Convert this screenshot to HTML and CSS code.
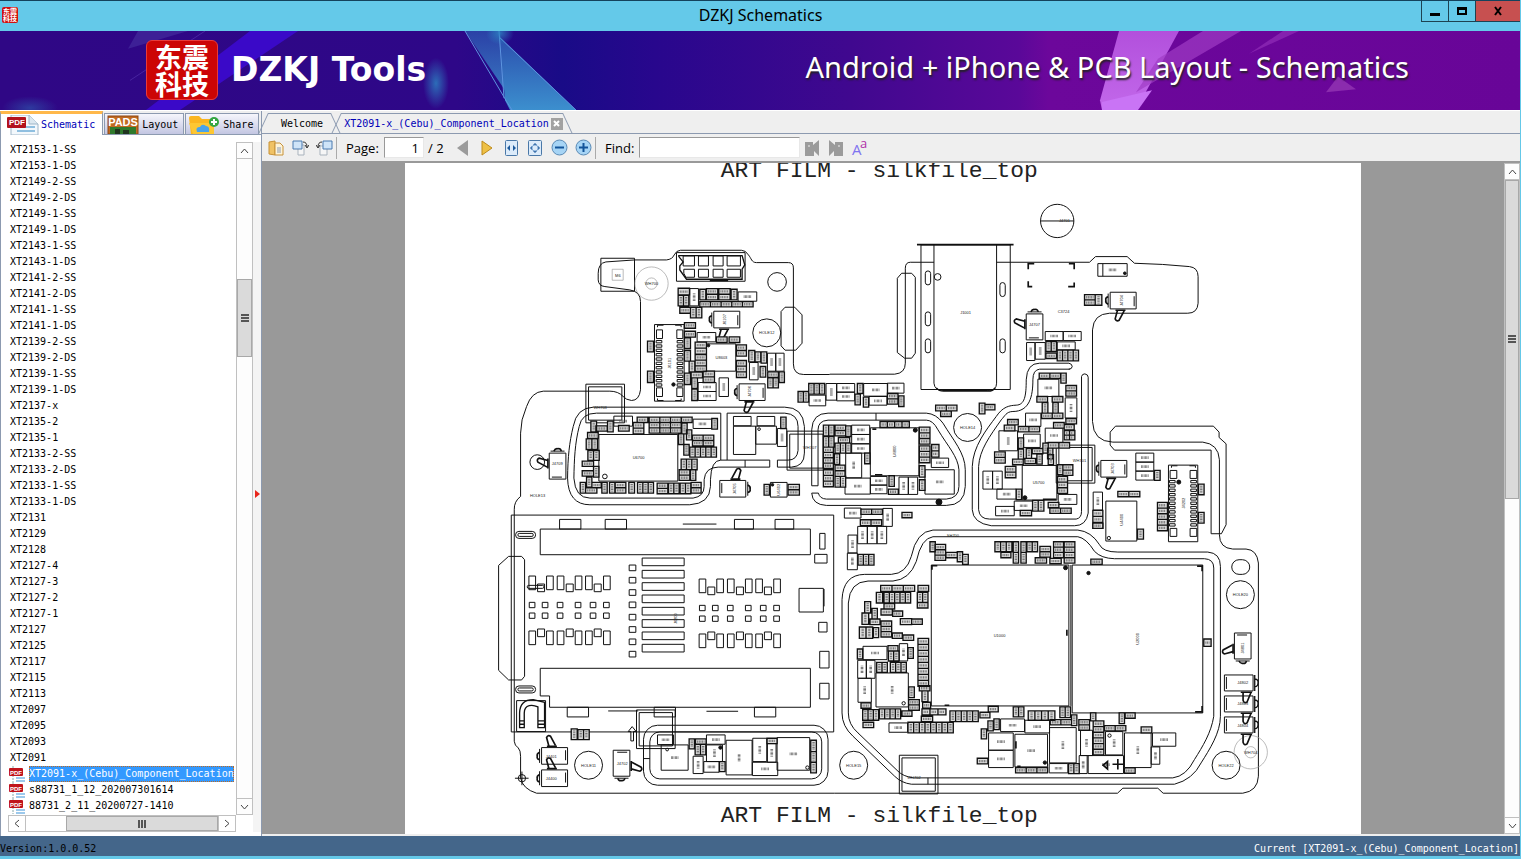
FILE: index.html
```html
<!DOCTYPE html>
<html lang="en">

<head>
    <meta charset="UTF-8">
    <meta name="viewport" content="width=device-width, initial-scale=1.0">
    <title>DZKJ Schematics</title>
    <link rel="stylesheet" href="styles.css">
</head>

<body>
    <header class="titlebar">
        <div class="app-icon"><span>东震</span><span>科技</span></div>
        <h1>DZKJ Schematics</h1>
        <div class="window-buttons">
            <button type="button" aria-label="Minimize"><svg width="12" height="12"><path d="M1 8h10v3H1z"/></svg></button>
            <button type="button" aria-label="Maximize"><svg width="12" height="12"><path d="M1 2h10v8H1zM3 5v3h6V5z" fill-rule="evenodd"/></svg></button>
            <button type="button" class="close" aria-label="Close"><svg width="12" height="12"><path d="M3 2l6 8M9 2l-6 8" stroke="#000" stroke-width="2"/></svg></button>
        </div>
    </header>

    <div class="banner">
        <svg class="banner-art" viewBox="0 0 1520 80" preserveAspectRatio="none" aria-hidden="true">
            <defs>
                <linearGradient id="base">
                    <stop offset="0" stop-color="#2f0785"/>
                    <stop offset="0.300" stop-color="#2e0788"/>
                    <stop offset="0.370" stop-color="#190b87"/>
                    <stop offset="0.430" stop-color="#28078d"/>
                    <stop offset="0.560" stop-color="#40088f"/>
                    <stop offset="0.670" stop-color="#5a0899"/>
                    <stop offset="0.690" stop-color="#6c079b"/>
                    <stop offset="1" stop-color="#680598"/>
                </linearGradient>
                <linearGradient id="shard" x2="0" y2="1">
                    <stop offset="0" stop-color="#2b4fae"/>
                    <stop offset="1" stop-color="#3c8fce"/>
                </linearGradient>
                <linearGradient id="beam" x2="0" y2="1">
                    <stop offset="0" stop-color="#b250dc"/>
                    <stop offset="1" stop-color="#c268ea"/>
                </linearGradient>
                <radialGradient id="glow">
                    <stop offset="0" stop-color="#2c86c4" stop-opacity="0.800"/>
                    <stop offset="1" stop-color="#2c86c4" stop-opacity="0"/>
                </radialGradient>
            </defs>
            <path d="M0 0h1520v80H0z" fill="url(#base)"/>
            <path d="M250 0h48L180 80h-34z" fill="#3d0ad8" opacity="0.800"/>
            <path d="M138 0h50l-60 18z" fill="#4b3aa5" opacity="0.500"/>
            <path d="M205 0l-75 50" stroke="#6240bb" opacity="0.500"/>
            <ellipse cx="436" cy="53" rx="13" ry="26" fill="url(#glow)"/>
            <ellipse cx="30" cy="78" rx="28" ry="12" fill="url(#glow)" opacity="0.500"/>
            <path d="M465 0h35l5 60z" fill="url(#shard)" opacity="0.800"/>
            <path d="M500 6l76 74h-66l-5-10z" fill="url(#shard)"/>
            <path d="M465 0l42 72 5 8M499 0l5 68M499 6l77 74" fill="none" stroke="#5e95e0"/>
            <ellipse cx="500" cy="2" rx="14" ry="12" fill="url(#glow)"/>
            <path d="M1119 0h60l-43 80h-34l-2-10z" fill="url(#beam)"/>
            <path d="M1102 72l50-12-14 20h-36z" fill="#c974f5"/>
            <path d="M1203 0h38l-105 62 22-34z" fill="#a03cc4" opacity="0.700"/>
            <path d="M1283 0h16l-50 23z" fill="#a03cc4" opacity="0.500"/>
            <path d="M1338 46l18 13-30 3z" fill="#8b2cae"/>
        </svg>
        <div class="brand">
            <div class="logo">东震科技</div>
            <strong>DZKJ Tools</strong>
        </div>
        <p class="slogan">Android + iPhone &amp; PCB Layout - Schematics</p>
    </div>

    <div class="workspace">
        <aside class="sidebar">
            <nav class="side-tabs">
                <button type="button" class="side-tab active">
                    <svg width="32" height="20" viewBox="0 0 32 20" aria-hidden="true">
                        <path d="M4 0h18l9 9v11H4z" fill="#f3f8fc" stroke="#9fb6c8"/>
                        <path d="M22 0v9h9" fill="#dce8f0" stroke="#9fb6c8"/>
                        <path d="M14 12h14M10 16h18" stroke="#8fbfe0" stroke-width="2"/>
                        <rect y="2" width="19" height="11" rx="1" fill="#b3121d"/>
                        <text x="10" y="10" class="icon-text" text-anchor="middle">PDF</text>
                    </svg>
                    Schematic
                </button>
                <button type="button" class="side-tab">
                    <svg width="32" height="19" viewBox="0 0 32 19" aria-hidden="true">
                        <rect x="1" y="1" width="30" height="18" fill="#c06a22" stroke="#8c4713"/>
                        <path d="M3 12h26v7H3z" fill="#2f7a2c"/>
                        <path d="M8 14h5v5H8zM16 15h6v4h-6z" fill="#20351f"/>
                        <text x="16" y="11" class="icon-text pads" text-anchor="middle">PADS</text>
                    </svg>
                    Layout
                </button>
                <button type="button" class="side-tab">
                    <svg width="32" height="19" viewBox="0 0 32 19" aria-hidden="true">
                        <path d="M1 3q0-2 2-2h8l3 3h11v15H3z" fill="#fbb621"/>
                        <path d="M1 8h25v11H5z" fill="#fdc733"/>
                        <path d="M9 17q-2-5 3-5 2-4 6-1 4 0 3 6z" fill="#4aa3ea"/>
                        <circle cx="26" cy="7" r="5" fill="#35a643"/>
                        <path d="M26 4v6M23 7h6" stroke="#fff" stroke-width="2"/>
                    </svg>
                    Share
                </button>
            </nav>
            <div class="side-body">
                <div class="tree-area">
                    <div class="tree-row">
                        <ul class="tree">
                            <li><a href="#">XT2153-1-SS</a></li>
                            <li><a href="#">XT2153-1-DS</a></li>
                            <li><a href="#">XT2149-2-SS</a></li>
                            <li><a href="#">XT2149-2-DS</a></li>
                            <li><a href="#">XT2149-1-SS</a></li>
                            <li><a href="#">XT2149-1-DS</a></li>
                            <li><a href="#">XT2143-1-SS</a></li>
                            <li><a href="#">XT2143-1-DS</a></li>
                            <li><a href="#">XT2141-2-SS</a></li>
                            <li><a href="#">XT2141-2-DS</a></li>
                            <li><a href="#">XT2141-1-SS</a></li>
                            <li><a href="#">XT2141-1-DS</a></li>
                            <li><a href="#">XT2139-2-SS</a></li>
                            <li><a href="#">XT2139-2-DS</a></li>
                            <li><a href="#">XT2139-1-SS</a></li>
                            <li><a href="#">XT2139-1-DS</a></li>
                            <li><a href="#">XT2137-x</a></li>
                            <li><a href="#">XT2135-2</a></li>
                            <li><a href="#">XT2135-1</a></li>
                            <li><a href="#">XT2133-2-SS</a></li>
                            <li><a href="#">XT2133-2-DS</a></li>
                            <li><a href="#">XT2133-1-SS</a></li>
                            <li><a href="#">XT2133-1-DS</a></li>
                            <li><a href="#">XT2131</a></li>
                            <li><a href="#">XT2129</a></li>
                            <li><a href="#">XT2128</a></li>
                            <li><a href="#">XT2127-4</a></li>
                            <li><a href="#">XT2127-3</a></li>
                            <li><a href="#">XT2127-2</a></li>
                            <li><a href="#">XT2127-1</a></li>
                            <li><a href="#">XT2127</a></li>
                            <li><a href="#">XT2125</a></li>
                            <li><a href="#">XT2117</a></li>
                            <li><a href="#">XT2115</a></li>
                            <li><a href="#">XT2113</a></li>
                            <li><a href="#">XT2097</a></li>
                            <li><a href="#">XT2095</a></li>
                            <li><a href="#">XT2093</a></li>
                            <li><a href="#">XT2091</a></li>
                            <li class="file selected"><svg width="18" height="16" aria-hidden="true"><use href="#pdf"/></svg><a href="#">XT2091-x_(Cebu)_Component_Location</a></li>
                            <li class="file"><svg width="18" height="16" aria-hidden="true"><use href="#pdf"/></svg><a href="#">s88731_1_12_202007301614</a></li>
                            <li class="file"><svg width="18" height="16" aria-hidden="true"><use href="#pdf"/></svg><a href="#">88731_2_11_20200727-1410</a></li>
                        </ul>
                        <div class="scroll-v">
                            <button type="button" aria-label="Scroll up"><svg width="9" height="6"><path d="M1 5l3.500-4L8 5"/></svg></button>
                            <div class="track track-tree"><div class="thumb"></div></div>
                            <button type="button" aria-label="Scroll down"><svg width="9" height="6"><path d="M1 1l3.500 4L8 1"/></svg></button>
                        </div>
                    </div>
                    <div class="scroll-h">
                        <button type="button" aria-label="Scroll left"><svg width="6" height="9"><path d="M5 1L1 4.500 5 8"/></svg></button>
                        <div class="track"><div class="thumb"></div></div>
                        <button type="button" aria-label="Scroll right"><svg width="6" height="9"><path d="M1 1l4 3.500L1 8"/></svg></button>
                    </div>
                </div>
                <div class="splitter"><svg width="5" height="8"><path d="M0 0l5 4-5 4z" fill="#e8261c"/></svg></div>
            </div>
        </aside>

        <main class="viewer">
            <nav class="doc-tabs">
                <button type="button" class="doc-tab">Welcome</button>
                <div class="doc-tab active">
                    <span>XT2091-x_(Cebu)_Component_Location</span>
                    <button type="button" class="tab-close" aria-label="Close tab"><svg width="7" height="7"><path d="M1 1l5 5M6 1L1 6" stroke="#fff" stroke-width="2"/></svg></button>
                </div>
            </nav>
            <div class="toolbar">
                <button type="button" aria-label="Open"><svg width="16" height="16"><path d="M1 2l6-1v14l-6-1z" fill="#f0c265" stroke="#c79239"/><path d="M7 3h5l3 3v9H7z" fill="#fdf3d9" stroke="#c79239"/><path d="M9 8h4M9 10h4M9 12h4" stroke="#8a9bb5"/></svg></button>
                <button type="button" aria-label="Rotate right"><svg width="17" height="16"><path d="M6 5h6v10H6z" fill="#f6f6f6" stroke="#a9b3bd"/><path d="M1 1h9v8H1z" fill="#cfe4f8" stroke="#4a7ab0"/><path d="M11 2q4 0 4 5M13 5l2 3 2-3" fill="none" stroke="#333"/></svg></button>
                <button type="button" aria-label="Rotate left"><svg width="17" height="16"><path d="M4 6h7v9H4z" fill="#f6f6f6" stroke="#a9b3bd"/><path d="M7 1h9v8H7z" fill="#cfe4f8" stroke="#4a7ab0"/><path d="M6 2q-4 0-4 5M0 5l2 3 2-3" fill="none" stroke="#333"/></svg></button>
                <span class="separator"></span>
                <label for="page">Page:</label>
                <input type="text" id="page" class="page-input" value="1">
                <span class="page-total">/ 2</span>
                <button type="button" aria-label="Previous page"><svg width="12" height="16"><path d="M11 0v16L0 8z" fill="#9b9b9b"/></svg></button>
                <button type="button" aria-label="Next page"><svg width="12" height="16"><path d="M1 1v14l10-7z" fill="#eec045" stroke="#bd8a1c"/></svg></button>
                <button type="button" aria-label="Fit width"><svg width="13" height="16"><rect x="0.500" y="0.500" width="12" height="15" rx="1" fill="#dcebfa" stroke="#4a78a8"/><path d="M2 8l3-3v6zM11 8L8 5v6z" fill="#1d5a9c"/></svg></button>
                <button type="button" aria-label="Fit page"><svg width="14" height="16"><rect x="0.500" y="0.500" width="13" height="15" rx="1" fill="#dcebfa" stroke="#4a78a8"/><path d="M7 3l2 2H5zM7 13l2-2H5zM2 8l2-2v4zM12 8l-2-2v4z" fill="#1d5a9c"/><circle cx="7" cy="8" r="3" fill="none" stroke="#7fa8d4"/></svg></button>
                <button type="button" aria-label="Zoom out"><svg width="17" height="17"><circle cx="8.500" cy="8.500" r="7.500" fill="#a6d4f5" stroke="#5a8ab5"/><path d="M4 8.500h9" stroke="#12549a" stroke-width="2"/></svg></button>
                <button type="button" aria-label="Zoom in"><svg width="17" height="17"><circle cx="8.500" cy="8.500" r="7.500" fill="#a6d4f5" stroke="#5a8ab5"/><path d="M4 8.500h9M8.500 4v9" stroke="#12549a" stroke-width="2"/></svg></button>
                <span class="separator"></span>
                <label for="find">Find:</label>
                <input type="text" id="find" class="find-input">
                <button type="button" aria-label="Find previous"><svg width="16" height="16"><path d="M1 2h8v3l6-5v16l-5-5v5H1z" fill="#9b9b9b"/><path d="M5 5v2" stroke="#eee"/></svg></button>
                <button type="button" aria-label="Find next"><svg width="16" height="16"><path d="M15 2H7v3L1 0v16l5-5v5h9z" fill="#9b9b9b"/><path d="M11 5v2" stroke="#eee"/></svg></button>
                <button type="button" aria-label="Match case"><svg width="20" height="24"><text x="2" y="19" class="case-large">A</text><text x="10" y="12" class="case-small">a</text></svg></button>
            </div>
            <div class="document">
                <div class="canvas">
                    <div class="sheet">
                        <svg class="board" viewBox="1215 489 2871 2016" role="img" aria-label="Board component location">
                            <defs>
                                <symbol id="pdf" viewBox="0 0 18 16">
                                    <path d="M4 0h12v16H4z" fill="#fff"/>
                                    <path d="M5 0v16" stroke="#8aa" stroke-dasharray="2 1"/>
                                    <path d="M8 12h9M8 15h9" stroke="#9cc9ec" stroke-width="2"/>
                                    <rect x="1" y="2" width="14" height="8" rx="1" fill="#c0141c"/>
                                    <text x="8" y="9" class="icon-text tiny" text-anchor="middle">PDF</text>
                                </symbol>
                                <!-- coax switch, origin at the body's top left -->
                                <g id="coax">
                                    <path d="M0 0h78v50H0zM-6 4v42M72 12v30"/>
                                    <path d="M-6 14q-9 2-7 10 -2 8 7 12M16 54h30" stroke-width="5"/>
                                    <path d="M22 54l-7 26q4 9 12 4l15-28" stroke-width="5"/>
                                </g>
                                <!-- double antenna frame -->
                                <g id="frame"><path d="M0 0h116v116H0zM8 8h100v100H8z"/></g>
                            </defs>
                            <text class="film" x="2163" y="531">ART FILM - silkfile_top</text>
                            <text class="film" x="2163" y="2466">ART FILM - silkfile_top</text>

                            <!-- top left -->
                            <g transform="translate(1470 720)">
                                <path d="M1020 404H942Q911 404 911 372V84Q911 68 896 68H800C785 68 785 55 776 45Q768 31 755 31H572Q560 31 553 45Q548 58 530 60L435 60L348 66Q325 70 325 100V120Q326 138 345 140L420 150Q452 155 452 185V450Q448 482 425 482Q408 480 400 470Q385 454 360 454H160Q125 456 110 500Q92 540 92 580V770Q72 785 73 810"/>
                                <path d="M693 661V520H320Q275 520 268 560C255 610 253 660 252 715Q256 775 300 775H610Q643 770 643 740V720Q646 683 685 682H840V661H712V520H885Q925 522 925 560V632Q922 661 895 661H863V682H905Q944 680 944 640V560Q940 502 885 502H310Q260 504 250 560C238 610 234 650 233 715Q235 795 300 795H600Q660 792 662 740V720Q664 661 693 661H712M766 661V682"/>
                                <path d="M966 738V570Q968 520 1015 520H1310Q1340 522 1360 550C1390 600 1427 640 1427 690V740Q1425 797 1370 797H1010Q968 795 966 760H986Q990 777 1010 778H1370Q1408 775 1408 740V690C1405 650 1375 620 1345 570Q1330 541 1310 541H1015Q985 543 985 570V738ZM1159 520v21"/>
                                <path d="M333 55h101v99H333zM560 38h206v86H560z"/>
                                <path class="faint" d="M367 88h33v33h-33z"/>
                                <path d="M567 47H757L765 75 757 88V118H590L570 90V78L580 66 567 50Z" stroke-width="4"/>
                                <path d="M580 48h34v30h-34zM626 48h30v30h-30zM670 48h30v30h-30zM712 48h40v30h-40zM582 88h32v24h-26l-6-12zM626 88h30v24h-30zM670 88h30v24h-30zM712 88h40v24h-40z"/>
                                <path d="M660 121h55" stroke-width="6"/>
                                <circle class="faint" cx="485" cy="131" r="50"/>
                                <circle class="faint" cx="485" cy="131" r="17"/>
                                <circle cx="862" cy="126" r="28"/>
                                <circle cx="831" cy="279" r="42"/>
                                <path d="M886 202H915L937 225V310L918 331H886L874 318V215Z"/>
                                <circle cx="142" cy="667" r="22"/>
                                <path d="M494 254h89v230h-89zM500 270h18v26h-18zM561 270h18v26h-18zM500 444h18v26h-18zM561 444h18v26h-18zM503 262v-6h18M556 256h18v6M503 476v6h18M556 482h18v-6"/>
                                <circle class="dot" cx="551" cy="434" r="5"/>
                                <path d="M650 312h88v82h-88zM327 584h237v140H327zM731 530h53v28h-53zM802 530h53v28h-53zM731 559h67v85h-67zM798 559h62v54h-62zM842 728h50v44h-50z"/>
                                <circle class="dot" cx="656" cy="317" r="4"/>
                                <circle cx="345" cy="710" r="7"/>
                                <circle cx="808" cy="568" r="4"/>
                                <circle class="dot" cx="848" cy="735" r="4"/>
                                <use href="#frame" x="288" y="433"/>
                                <path d="M892 574h110v117H892zM900 583h100v102H900z"/>
                                <use href="#coax" x="672" y="214"/>
                                <use href="#coax" x="748" y="432"/>
                                <use href="#coax" transform="translate(768 772) rotate(180)"/>
                                <use href="#coax" transform="translate(228 640) rotate(90)"/>
                                <g id="parts-a"></g>
                            </g>

                            <!-- top right -->
                            <g transform="translate(2490 570)">
                                <path d="M0 553H195Q227 550 227 520V235Q227 217 242 217H313M501 217H780L798 200H893L915 220Q1000 222 1080 230Q1106 233 1106 260V340Q1104 370 1075 370H840Q792 372 789 420V695Q791 755 850 757H1120Q1167 762 1170 810V1035"/>
                                <circle cx="683" cy="93" r="50"/>
                                <path d="M633 93h100"/>
                                <path d="M262 164H552" stroke-width="5"/>
                                <path d="M274 165h268v434H274zM313 165V580Q315 602 340 602H475Q501 602 501 580V165"/>
                                <path d="M320 594q8 10 22 10h133q16 0 22-10" stroke-width="4"/>
                                <rect x="287" y="243" width="16" height="42" rx="8"/>
                                <rect x="287" y="366" width="16" height="42" rx="8"/>
                                <rect x="287" y="447" width="16" height="42" rx="8"/>
                                <rect x="511" y="278" width="16" height="42" rx="8"/>
                                <rect x="511" y="447" width="16" height="42" rx="8"/>
                                <circle cx="324" cy="261" r="10"/>
                                <path d="M216 250H246L257 262V490L246 505H225L203 488V265Z"/>
                                <path d="M596 238v-17h18M718 221h16v17M596 274v16h12M716 290h18v-12" stroke-width="5"/>
                                <path d="M858 709H1152L1169 727V743L1190 762V1005L1176 1032H1145V781H855L842 766V727Z"/>
                                <path d="M720 538H630Q610 540 610 570C610 620 600 665 550 665C530 665 525 680 515 690C480 740 450 780 447 830V960Q450 988 480 988H740Q756 985 756 965V560Q758 552 766 552Q776 554 776 562V970Q770 1008 735 1008H485Q430 1000 428 960V830C430 770 470 720 500 680C520 650 540 647 560 646C585 645 590 620 590 570Q592 520 630 520H718Q728 522 728 530Q727 538 718 538Z"/>
                                <circle cx="414" cy="713" r="42"/>
                                <path d="M122 714h146v144H122zM578 827h104v104H578zM829 934h93v120h-93z"/>
                                <path d="M128 718h12M136 855h22M640 929h40" stroke-width="5"/>
                                <circle class="dot" cx="257" cy="721" r="6"/>
                                <circle class="dot" cx="328" cy="937" r="9"/>
                                <circle class="dot" cx="586" cy="924" r="6"/>
                                <circle cx="838" cy="1045" r="5"/>
                                <path d="M680 766h116v114H680zM688 773h100v100H688z"/>
                                <path d="M820 221v38"/>
                                <circle class="dot" cx="886" cy="250" r="4"/>
                                <path d="M1017 826h88v230h-88zM1022 842h20v24h-20zM1082 842h20v24h-20zM1022 1016h20v24h-20zM1082 1016h20v24h-20zM1026 834v-6h18M1080 828h18v6"/>
                                <circle class="dot" cx="1048" cy="877" r="6"/>
                                <use href="#coax" transform="translate(640 372) rotate(90)"/>
                                <use href="#coax" x="842" y="307"/>
                                <use href="#coax" x="814" y="812"/>
                                <g id="parts-b"></g>
                            </g>

                            <!-- bottom left -->
                            <g transform="translate(1470 1500)">
                                <path d="M73 30V725Q74 738 85 745Q92 752 92 770V835Q98 868 140 881H1035"/>
                                <path d="M64 46h968v651H64z"/>
                                <path d="M151 88h811v77H151zM151 506h811v117H179v-34h-28z"/>
                                <path d="M209 59h64v29h-64zM346 59h64v29h-64zM734 59h57v29h-57zM856 59h56v29h-56zM232 623h64v29h-64zM493 623h64v29h-64zM794 623h64v29h-64zM579 73h101M355 634h90M650 635h95"/>
                                <path d="M56 170H95L104 180V530L95 541H56L26 512V197Z"/>
                                <rect x="77" y="95" width="60" height="21" rx="10"/>
                                <rect x="84" y="101" width="46" height="9" rx="4"/>
                                <rect x="77" y="559" width="60" height="21" rx="10"/>
                                <rect x="84" y="565" width="46" height="9" rx="4"/>
                                <rect x="112" y="257" width="50" height="9" rx="4"/>
                                <path d="M990 101h16v47h-16zM975 164h37v26h-37zM928 266h73v71h-73zM987 368h25v29h-25zM990 455h28v50h-28zM990 551h28v47h-28zM1003 268v52"/>
                                <path d="M80 603h87v93H80z"/>
                                <path d="M89 684V640Q90 600 130 600L164 608V684H144V622Q130 615 118 618 103 622 103 640V684ZM89 664h14M89 674h14M144 664h20M144 674h20" stroke-width="4"/>
                                <circle cx="96" cy="836" r="11"/>
                                <path d="M75 836h41M96 816v41M423 724v-28h-8l12-15 12 15h-8v28z"/>
                                <circle cx="296" cy="797" r="42"/>
                                <use href="#frame" x="440" y="631"/>
                                <rect x="461" y="677" width="554" height="180" rx="42"/>
                                <rect x="480" y="697" width="516" height="141" rx="30"/>
                                <path d="M461 777h19"/>
                                <circle cx="532" cy="750" r="4"/>
                                <circle class="dot" cx="692" cy="744" r="5"/>
                                <circle cx="953" cy="804" r="5"/>
                                <use href="#coax" transform="translate(155 794) scale(1 -1)"/>
                                <use href="#coax" transform="translate(155 861) scale(1 -1)"/>
                                <use href="#coax" transform="translate(370 830) rotate(-90)"/>
                                <g id="parts-c"></g>
                            </g>

                            <!-- bottom right -->
                            <g transform="translate(2505 1560)">
                                <path d="M0 821H849L865 806H970L986 821H1225Q1270 815 1272 770V130Q1268 90 1235 88H1195Q1155 85 1155 45"/>
                                <path d="M295 31H730Q770 35 795 75Q805 97 850 97H1120Q1158 100 1158 140V590C1158 640 1125 690 1100 730Q1075 780 1020 794H230Q200 790 180 770L55 650Q22 620 22 580V240Q25 165 90 164H170Q215 162 230 110Q245 35 295 31Z"/>
                                <path d="M295 51H730Q755 55 780 95Q800 116 840 117H1110Q1138 118 1138 145V590C1130 640 1105 680 1080 720Q1055 770 1015 775H235Q205 770 190 755L70 640Q41 615 41 580V250Q45 186 100 184H175Q225 180 245 125Q260 55 295 51ZM280 775v19"/>
                                <path d="M290 136h413v423H290zM713 136h392v444H713zM709 136v423"/>
                                <path d="M292 150v-12h16M697 330v18M330 557h14M1088 139h15v16M1082 577h21v-18" stroke-width="5"/>
                                <circle class="dot" cx="693" cy="144" r="6"/>
                                <circle class="dot" cx="762" cy="160" r="5"/>
                                <use href="#frame" x="194" y="707"/>
                                <circle cx="57" cy="737" r="42"/>
                                <circle cx="1218" cy="225" r="42"/>
                                <circle cx="1175" cy="737" r="42"/>
                                <rect x="1192" y="120" width="54" height="44" rx="22"/>
                                <circle class="faint" cx="1249" cy="698" r="50"/>
                                <circle class="faint" cx="1249" cy="698" r="17"/>
                                <use href="#coax" transform="matrix(0 -1 -1 0 1250 418)"/>
                                <path d="M1170 466h86v48h-86zM1170 529h86v48h-86zM1170 592h86v48h-86zM1176 472v36M1176 535v36M1176 598v36"/>
                                <path d="M1261 466v48M1261 529v48M1261 592v48M1261 478q12 2 10 12 0 10-10 12M1261 541q12 2 10 12 0 10-10 12M1261 604q12 2 10 12 0 10-10 12M1219 518h34M1219 581h34M1219 644h34" stroke-width="4"/>
                                <path d="M1226 518v24q3 11 12 5l12-29M1226 581v24q3 11 12 5l12-29M1226 644v24q3 11 12 5l12-29" stroke-width="5"/>
                                <g id="parts-d"></g>
                                <circle cx="207" cy="551" r="5"/>
                                <circle class="dot" cx="631" cy="729" r="5"/>
                                <circle cx="825" cy="648" r="5"/>
                                <path d="M544 665v22M548 740h10M850 718v32M834 734h32M806 737l13-11v22z" stroke-width="5"/>
                            </g>
                            <g id="labels"></g>
                        </svg>
                    </div>
                </div>
                <div class="scroll-v">
                    <button type="button" aria-label="Scroll up"><svg width="9" height="6"><path d="M1 5l3.500-4L8 5"/></svg></button>
                    <div class="track track-doc"><div class="thumb"></div></div>
                    <button type="button" aria-label="Scroll down"><svg width="9" height="6"><path d="M1 1l3.500 4L8 1"/></svg></button>
                </div>
            </div>
        </main>
    </div>

    <footer class="statusbar">
        <span>Version:1.0.0.52</span>
        <span class="current">Current [XT2091-x_(Cebu)_Component_Location]</span>
    </footer>

    <script src="board.js"></script>
</body>

</html>
```

FILE: styles.css
```css
* {
    box-sizing: border-box;
}

body {
    margin: 0;
    height: 100vh;
    display: flex;
    flex-direction: column;
    overflow: hidden;
    background-color: #efefef;
    border-right: 1px solid #64c8e8;
    border-bottom: 3px solid #64c8e8;
    font-family: "DejaVu Sans Mono", "Liberation Mono", monospace;
    font-size: 10px;
    color: #000;
}

button {
    font: inherit;
    color: inherit;
    margin: 0;
    padding: 0;
    border: none;
    background: none;
}

svg {
    display: block;
    flex: none;
}

/* title bar */
.titlebar {
    flex: none;
    height: 31px;
    display: flex;
    align-items: flex-start;
    justify-content: space-between;
    background-color: #64c9e9;
    border-top: 1px solid #14425c;
}

.titlebar h1 {
    margin: 0;
    font: 16px/28px "Noto Sans", "Open Sans", sans-serif;
}

.app-icon {
    width: 16px;
    height: 16px;
    margin: 6px 82px 0 2px;
    background-color: #d01010;
    border-radius: 2px;
    color: #fff;
    font: bold 7px/7px "Noto Sans CJK SC", sans-serif;
    padding: 1px;
}

.app-icon span {
    display: block;
}

.window-buttons {
    display: flex;
    border: 1px solid #1d4252;
    border-top: none;
    border-right: none;
}

.window-buttons button {
    width: 27px;
    height: 20px;
    display: flex;
    align-items: center;
    justify-content: center;
    border-right: 1px solid #1d4252;
}

.window-buttons .close {
    width: 44px;
    background-color: #c75050;
    border-right: none;
}

/* banner */
.banner {
    flex: none;
    height: 80px;
    position: relative;
    display: flex;
    align-items: center;
    justify-content: space-between;
    padding: 0 111px 2px 146px;
    color: #fff;
    border-bottom: 1px solid #fff;
}

.banner-art {
    position: absolute;
    left: 0;
    top: 0;
    width: 100%;
    height: 100%;
}

.brand {
    position: relative;
    display: flex;
    align-items: center;
    gap: 13px;
}

.logo {
    width: 72px;
    height: 60px;
    padding: 2px 8px;
    background-color: #cc0505;
    border: 1px solid #e83a3a;
    border-radius: 6px;
    font: bold 27px/27px "Noto Sans CJK SC", sans-serif;
    word-break: break-all;
}

.brand strong {
    font: bold 33px/44px "DejaVu Sans", sans-serif;
}

.slogan {
    position: relative;
    margin: 0;
    padding-bottom: 6px;
    font: 29px/40px "Noto Sans", "Open Sans", sans-serif;
    text-shadow: 1px 2px 2px #222;
}

.workspace {
    flex: 1;
    min-height: 0;
    display: flex;
}

/* left panel */
.sidebar {
    flex: none;
    width: 261px;
    display: flex;
    flex-direction: column;
}

.side-tabs {
    height: 24px;
    flex: none;
    display: flex;
    align-items: flex-end;
    gap: 1px;
    border-bottom: 1px solid #8c9ab0;
}

.side-tab {
    height: 21px;
    display: flex;
    align-items: center;
    gap: 3px;
    padding: 0 5px 0 2px;
    border: 1px solid #8c9ab0;
    border-bottom: none;
    background: linear-gradient(#f6f6fc, #c3c6e2);
}

.side-tab.active {
    height: 24px;
    margin-bottom: -1px;
    gap: 2px;
    padding: 0 7px 0 6px;
    border-top: 3px solid #ffb84a;
    background: #fff;
    color: #0000b8;
}

.icon-text {
    font: bold 8px "Liberation Sans", sans-serif;
    fill: #fff;
}

.icon-text.pads {
    font-size: 11px;
}

.side-body {
    flex: 1;
    min-height: 0;
    display: flex;
    background-color: #fff;
    border-left: 1px solid #8c9ab0;
    padding: 7px 0 4px 7px;
}

.tree-area {
    flex: 1;
    min-width: 0;
    display: flex;
    flex-direction: column;
}

.tree-row {
    flex: 1;
    min-height: 0;
    display: flex;
}

.tree {
    flex: 1;
    min-width: 0;
    margin: 0;
    padding: 0;
    list-style: none;
    overflow: hidden;
}

.tree li {
    height: 16px;
    display: flex;
    align-items: center;
    line-height: 14px;
    padding-left: 2px;
}

.tree li.file {
    padding-left: 0;
    gap: 3px;
}

.tree a {
    color: #000;
    text-decoration: none;
    white-space: nowrap;
}

.tree .selected a {
    line-height: 16px;
    background-color: #3399ff;
    color: #fff;
    outline: 1px dotted #c06a20;
    outline-offset: -1px;
}

.splitter {
    flex: none;
    width: 8px;
    background-color: #f4f4f4;
    display: flex;
    align-items: center;
    justify-content: center;
    padding-top: 14px;
}

/* scroll bars */
.scroll-v {
    flex: none;
    width: 17px;
    display: flex;
    flex-direction: column;
    background-color: #fdfdfd;
    border: 1px solid #c0c0c0;
}

.scroll-h {
    flex: none;
    height: 17px;
    width: 228px;
    display: flex;
    border: 1px solid #c0c0c0;
}

.scroll-v button,
.scroll-h button {
    flex: none;
    width: 16px;
    height: 15px;
    display: flex;
    align-items: center;
    justify-content: center;
}

.scroll-v button {
    width: 100%;
}

.scroll-v button path,
.scroll-h button path {
    fill: none;
    stroke: #444;
    stroke-width: 1;
}

.track {
    flex: 1;
    min-height: 0;
    display: flex;
    border: 0 solid #c0c0c0;
}

.scroll-v .track {
    flex-direction: column;
    border-width: 1px 0;
}

.scroll-h .track {
    border-width: 0 1px;
}

.thumb {
    background-color: #dadada;
    border: 1px solid #a8a8a8;
    display: flex;
    align-items: center;
    justify-content: center;
}

.thumb::before {
    content: "";
    width: 8px;
    height: 8px;
    background: repeating-linear-gradient(#555 0 2px, #dadada 2px 3px);
}

.scroll-h .thumb {
    margin-left: 40px;
    flex: 1;
}

.scroll-h .thumb::before {
    background: repeating-linear-gradient(90deg, #555 0 2px, #dadada 2px 3px);
}

.track-tree {
    padding-top: 120px;
}

.track-tree .thumb {
    height: 12%;
    min-height: 78px;
}

.track-doc .thumb {
    height: 50%;
}

/* document area */
.viewer {
    flex: 1;
    min-width: 0;
    display: flex;
    flex-direction: column;
    border-left: 1px solid #8c9ab0;
}

.doc-tabs {
    flex: none;
    height: 23px;
    display: flex;
    align-items: flex-end;
    padding-left: 6px;
    border-bottom: 1px solid #8c9ab0;
}

.doc-tab {
    position: relative;
    height: 20px;
    display: flex;
    align-items: center;
    padding: 0 8px 0 13px;
    border-top: 1px solid #8c9ab0;
    margin-right: 10px;
}

.doc-tab::before,
.doc-tab::after {
    content: "";
    position: absolute;
    top: -1px;
    height: 21px;
    width: 4px;
}

.doc-tab::before {
    left: -5px;
    border-left: 1px solid #8c9ab0;
    transform: skewX(-25deg);
}

.doc-tab::after {
    right: -5px;
    border-right: 1px solid #8c9ab0;
    transform: skewX(25deg);
}

.doc-tab.active {
    padding: 0 0 0 3px;
    color: #0000b8;
}

.tab-close {
    width: 12px;
    height: 12px;
    margin-left: 2px;
    background-color: #a2a2a2;
    display: flex;
    align-items: center;
    justify-content: center;
}

.toolbar {
    flex: none;
    height: 29px;
    display: flex;
    align-items: center;
    padding-left: 2px;
    border-bottom: 2px solid #999;
    font: 13px/20px "Open Sans", "Noto Sans", sans-serif;
}

.toolbar button {
    width: 24px;
    height: 24px;
    display: flex;
    align-items: center;
    justify-content: center;
}

.separator {
    width: 1px;
    height: 22px;
    margin-right: 9px;
    background-color: #aaa;
}

.toolbar label {
    min-width: 38px;
}

.toolbar label[for="find"] {
    min-width: 34px;
}

.toolbar input {
    height: 21px;
    border: 1px solid #e8e8e8;
    border-top-color: #999;
    border-left-color: #999;
    padding: 0 4px;
    background-color: #fff;
    font: inherit;
}

.toolbar .page-input {
    width: 40px;
    text-align: right;
}

.page-total {
    width: 27px;
    padding-left: 4px;
}

.toolbar .find-input {
    width: 161px;
}

.case-large {
    font-size: 15px;
    fill: #7f74f0;
}

.case-small {
    font-size: 13px;
    fill: #b02fa8;
}

.document {
    flex: 1;
    min-height: 0;
    display: flex;
    padding-bottom: 2px;
}

.canvas {
    flex: 1;
    min-width: 0;
    background-color: #999;
    overflow: hidden;
}

.sheet {
    width: 77%;
    min-height: 100%;
    margin: 0 auto;
    background-color: #fff;
}

.document .scroll-v {
    width: 16px;
}

/* board drawing */
.board {
    width: 100%;
    height: auto;
    fill: none;
    stroke: #111;
    stroke-width: 3;
}

.board text {
    fill: #222;
    stroke: none;
}

.board .icon-text.tiny {
    font-size: 6px;
    fill: #fff;
}

.board .film {
    font-family: "Liberation Mono", monospace;
    font-size: 69px;
}

.board .label {
    font-family: "Liberation Sans", sans-serif;
    font-size: 12px;
    text-anchor: middle;
    dominant-baseline: central;
}

.board .faint {
    stroke: #999;
    stroke-width: 2;
}

.board .dot {
    fill: #111;
}

.board .chip {
    fill: #ddd;
    stroke-width: 4;
}

.board .mark {
    stroke: #777;
    stroke-width: 7;
    stroke-dasharray: 3 2;
}

.board .mark-big {
    stroke: #555;
    stroke-width: 8;
    stroke-dasharray: 2 2;
}

/* status bar */
.statusbar {
    flex: none;
    height: 20px;
    display: flex;
    justify-content: space-between;
    align-items: flex-end;
    padding: 0 1px 0 0;
    line-height: 14px;
    background-color: #44668a;
}

.statusbar .current {
    color: #fff;
}
```

FILE: board.js
```js
// Parts are "x y w h [cols rows]", a block of equal cells. Chips are the
// small passives, boxes are the larger white ones.
const parts = {
    a: {
        chips: `565 145 34 20;565 166 16 32 2 1;630 148 18 32;650 146 34 17 1 2;687 146 34 17 1 2;724 148 18 32;630 185 32 16 5 1;570 202 32 18;602 202 17 32 2 1;
            584 248 33 17;584 274 33 18;584 294 18 32;584 332 18 32;598 364 17 32;584 400 18 34;473 304 18 32;473 394 18 34;680 291 32 17;718 291 32 17;
            616 307 34 18 1 2;616 344 34 17 1 3;740 315 30 17 1 2;740 362 30 17 1 3;604 397 34 17;640 394 34 17 1 2;606 414 17 32;606 448 17 34;
            777 332 18 34;796 336 17 30;814 336 17 34;811 380 17 32;834 396 32 17;868 396 16 32;834 414 16 30 2 1;
            442 532 32 16;430 548 32 17 1 2;478 532 32 16 3 3;575 532 32 16;386 557 32 17;318 558 34 16;303 544 17 32;353 544 17 32;
            293 578 32 18;289 597 17 32 2 1;294 632 17 30 2 1;277 664 34 16;311 680 16 32;277 693 34 16;271 728 16 32;290 712 16 30;287 744 34 16;306 728 28 16;336 728 16 32;359 728 16 32;376 728 32 16 1 2;417 728 17 32;443 728 16 32 3 1;502 730 32 16 1 2;536 730 16 32 2 1;571 730 16 32 2 1;604 728 30 16 1 2;
            576 550 16 32;566 582 16 32;582 614 16 32;590 570 16 30;608 586 32 16 2 2;600 622 16 30 5 1;574 658 16 32 3 1;568 690 32 16 1 2;602 690 16 32;666 536 17 32;873 532 16 34;
            925 455 16 32 2 1;957 431 16 32 3 1;1103 431 17 30;1096 463 16 32;1121 472 16 30;823 734 16 32;895 734 34 16 1 2;
            1001 556 16 32 2 1;1036 556 32 16 1 2;1068 558 16 32;1001 590 16 32 2 1;1046 593 34 16;1001 622 30 16 1 4;1036 610 16 30 3 1;1034 642 16 32;1036 676 30 17 1 2;1001 690 30 17 1 3;1036 710 16 32 2 1;1125 640 16 32`,
        boxes: `600 146 26 52;745 156 56 28;622 278 56 28;625 428 54 27 1 2;688 414 28 56;833 340 25 54 2 1;779 368 26 52;372 529 56 30;610 538 56 28;863 566 28 54;
            958 466 50 32;1009 431 32 50;1041 431 54 26 1 2;1122 431 72 38;1138 470 54 26;1086 556 54 28 1 3;1068 640 48 74;1066 715 76 48;1142 710 50 26 1 2`
    },
    b: {
        chips: `173 611 32 16 1 2;207 618 16 32;318 646 32 17 2 1;333 664 32 16;449 640 17 32;466 644 30 16;151 695 22 18 4 1;269 712 32 17 1 3;269 768 32 17 1 3;269 828 17 34;269 870 17 32;306 764 22 19 1 2;178 858 16 32;176 898 30 16;
            94 958 32 16 2 1;92 990 32 18 2 1;217 968 30 16;765 314 32 16 1 2;797 314 20 32;649 455 16 30 2 1;649 490 32 16;683 481 16 32 4 1;
            629 550 32 16 2 1;694 550 16 30;709 587 32 16 1 2;709 686 32 16;622 620 32 17;668 620 32 17;638 638 17 32;670 638 16 32;636 670 32 16 2 1;
            534 689 32 16;524 706 32 17;566 710 32 16 2 1;672 698 32 17;704 704 30 16;704 722 16 14 2 2;495 786 32 17 1 2;527 830 32 17 1 2;549 808 32 17;566 744 16 32;566 778 16 30;590 776 16 30;608 776 32 16;640 760 16 30;654 775 16 32;622 793 16 30;656 795 16 30;656 758 32 17 2 1;586 806 32 16;684 825 16 30;700 825 30 16 1 2;684 860 30 17 1 3;656 938 32 16;661 955 32 16 2 1;
            560 898 16 32;572 962 34 16;609 932 17 32 2 1;975 842 17 30;865 905 33 16 2 1;790 962 30 18 1 3;984 938 30 17 1 5;1107 883 17 32;1107 968 17 32`,
        boxes: `173 580 50 30;305 805 52 28;286 840 88 73;208 862 28 52 2 1;44 955 50 30;160 956 28 54;805 221 88 38;647 425 54 27 2 1;591 458 25 54;617 458 30 50;683 456 54 24;
            707 624 35 61;625 568 63 52;588 670 46 40;508 723 56 60;647 715 53 44;582 733 50 40;686 914 56 30;460 844 29 54 2 1;502 898 58 30;554 934 56 28;498 950 56 28;919 790 54 27 1 3;791 907 28 54`
    },
    c: {
        chips: `244 688 18 32;264 690 17 30 2 1;598 718 16 30;617 718 32 16;616 734 16 32 2 1;689 786 17 30;832 716 30 16;963 722 17 34;963 756 17 32 1 2`,
        boxes: `503 706 48 29;650 706 56 28;650 736 48 50;610 770 30 52;642 786 46 32;709 722 78 104;514 736 81 76;789 716 42 70;833 732 26 56;788 788 76 40;862 714 98 98`
    },
    d: {
        chips: `70 104 16 32 3 1;775 10 30 16;909 28 18 30;286 66 16 30;301 74 32 16 1 3;334 98 34 16;368 96 16 30;384 104 17 30;481 66 17 30 3 1;499 98 30 16;536 66 16 32 1 2;559 66 16 32 1 2;577 66 16 30 2 1;616 80 32 16 1 2;602 114 34 16;657 66 30 16 1 3;646 116 34 16;689 66 32 16 1 4;769 118 34 16;
            138 197 34 18 3 1;250 197 32 18;125 218 19 32;148 218 16 32 5 1;248 218 16 30 2 1;248 249 32 16;148 252 32 16;90 246 18 34;112 266 16 32;82 280 20 34;106 298 30 17;139 268 34 18;174 274 30 16;139 304 32 16 1 3;197 297 34 18;231 298 32 16;74 322 20 34 2 1;116 324 16 30;173 340 30 16;205 346 32 16;
            250 356 32 18 1 8;254 498 32 16;262 514 18 32;68 388 16 30;160 378 30 16;161 394 16 30 2 1;220 384 16 32;126 428 16 30 2 1;167 428 16 30 3 1;79 550 30 16;222 502 17 32;222 540 32 16 1 2;264 548 24 18;202 574 30 16;84 570 16 32 3 1;134 568 16 30 4 1;85 608 32 16;262 568 24 18 3 1;260 590 34 16;
            220 608 17 32 8 1;346 574 17 32 5 1;436 578 30 17;461 560 30 17;536 562 16 30 2 1;581 574 20 28 4 1;676 562 16 32 2 1;711 586 16 32;460 604 16 30;478 598 16 32;440 628 16 30;428 716 32 17;543 744 32 16 3 1;702 732 16 30 2 1;647 600 32 16 2 1;733 600 32 16 1 2;
            776 604 32 17 1 6;768 580 16 24;810 618 32 16 2 1;854 580 16 32;872 580 30 16;920 622 32 18;870 745 32 16;1108 358 22 22`,
        boxes: `69 20 29 52 3 1;40 46 27 54;38 100 30 50;85 380 72 40;194 372 25 52;69 422 26 54 2 1;70 476 40 72;124 460 97 102;163 610 56 28;498 598 72 38;571 602 74 38;462 640 74 52 1 2;541 644 98 98;645 624 80 106;644 732 56 28;738 632 36 76;734 708 24 54;813 636 52 70;761 708 106 54;870 640 80 104;954 640 70 40;950 682 26 52`
    }
};

// Pins of the two board connectors
const pins = { a: [[499, 302], [562, 302]], b: [[1020, 872], [1084, 872]] };

// Battery connector pads
const pads = [];
for (const [left, top] of [[117, 229], [628, 238]]) {
    for (const dx of [0, 53, 85, 139, 170, 224]) {
        pads.push([left + dx, top, 20, 41], [left + dx, top + 165, 20, 41]);
    }
    for (const dx of [26, 112, 196]) {
        pads.push([left + dx, top + 24, 21, 23], [left + dx, top + 159, 21, 23]);
    }
    for (const dx of [1, 40, 85, 139, 184, 224]) {
        pads.push([left + dx, top + 79, 17, 16], [left + dx, top + 111, 17, 16]);
    }
}
for (let i = 0; i < 8; i++) {
    pads.push([457, 175 + i * 37, 126, 23], [418, 196 + i * 37, 20, 17]);
}

// x, y, text, rotated
const labels = [
    [3195, 662, 'J4701'], [2898, 937, 'J1001'], [3192, 936, 'C3724'], [2301, 999, 'HOLE12'], [2904, 1283, 'HOLE14'],
    [1955, 851, 'WH700'], [1854, 828, 'M6'], [2165, 1073, 'U8603'], [1916, 1374, 'U6700'], [1613, 1487, 'HOLE13'],
    [2009, 1090, 'J6101', 1], [2174, 959, 'J6107', 1], [2250, 1175, 'J4706', 1], [1672, 1392, 'J4709'], [2204, 1467, 'J4705', 1],
    [2337, 1470, 'U6402', 1], [2684, 1355, 'U4800', 1], [3117, 1447, 'U5700'], [3365, 1560, 'U4400', 1], [3552, 1510, 'J4202', 1],
    [3240, 1382, 'WH701'], [3366, 902, 'J4704', 1], [3338, 1407, 'J4703', 1], [3105, 975, 'J4707'], [2430, 1343, 'WH707'],
    [1801, 1222, 'WH703'], [2026, 1857, 'J6200', 1], [1766, 2297, 'HOLE11'], [2562, 2297, 'HOLE15'], [3723, 1785, 'HOLE20'],
    [3680, 2297, 'HOLE22'], [3754, 2258, 'WH704'], [1654, 2272, 'J4401'], [1654, 2338, 'J4400'], [1867, 2293, 'J4702'],
    [3000, 1908, 'U1000'], [3414, 1918, 'U2000', 1], [3730, 1945, 'J4801', 1], [3730, 2050, 'J4802'], [3730, 2113, 'J4803'],
    [3730, 2177, 'J4804'], [2743, 2334, 'WH702'], [2860, 1608, 'SH700']
];

const SVG_NS = 'http://www.w3.org/2000/svg';

function draw(parent, tag, attrs) {
    const node = document.createElementNS(SVG_NS, tag);
    for (const name in attrs) {
        node.setAttribute(name, attrs[name]);
    }
    parent.appendChild(node);
    return node;
}

function drawCells(parent, list, big) {
    let outline = '';
    let marks = '';
    list.split(';').forEach(item => {
        const [x, y, w, h, cols = 1, rows = 1] = item.trim().split(/\s+/).map(Number);
        for (let c = 0; c < cols; c++) {
            for (let r = 0; r < rows; r++) {
                const left = x + c * w;
                const top = y + r * h;
                const inset = big ? Math.max(w, h) / 2 - 11 : 5;
                outline += `M${left} ${top}h${w}v${h}h${-w}z`;
                marks += w >= h
                    ? `M${left + inset} ${top + h / 2}h${w - inset * 2}`
                    : `M${left + w / 2} ${top + inset}v${h - inset * 2}`;
            }
        }
    });
    draw(parent, 'path', { d: outline, class: big ? 'box' : 'chip' });
    draw(parent, 'path', { d: marks, class: big ? 'mark-big' : 'mark' });
}

for (const key in parts) {
    const group = document.getElementById('parts-' + key);
    drawCells(group, parts[key].boxes, true);
    drawCells(group, parts[key].chips, false);
}

for (const key in pins) {
    let d = '';
    for (const [x, y] of pins[key]) {
        for (let i = 0; i < 11; i++) {
            d += `M${x} ${y + i * 13}h17v7h-17z`;
        }
    }
    draw(document.getElementById('parts-' + key), 'path', { d });
}

const padPath = pads.map(([x, y, w, h]) => `M${x} ${y}h${w}v${h}h${-w}z`).join('');
draw(document.getElementById('parts-c'), 'path', { d: padPath });

labels.forEach(([x, y, text, rotated]) => {
    const attrs = { x, y, class: 'label' };
    if (rotated) {
        attrs.transform = `rotate(-90 ${x} ${y})`;
    }
    draw(document.getElementById('labels'), 'text', attrs).textContent = text;
});
```
